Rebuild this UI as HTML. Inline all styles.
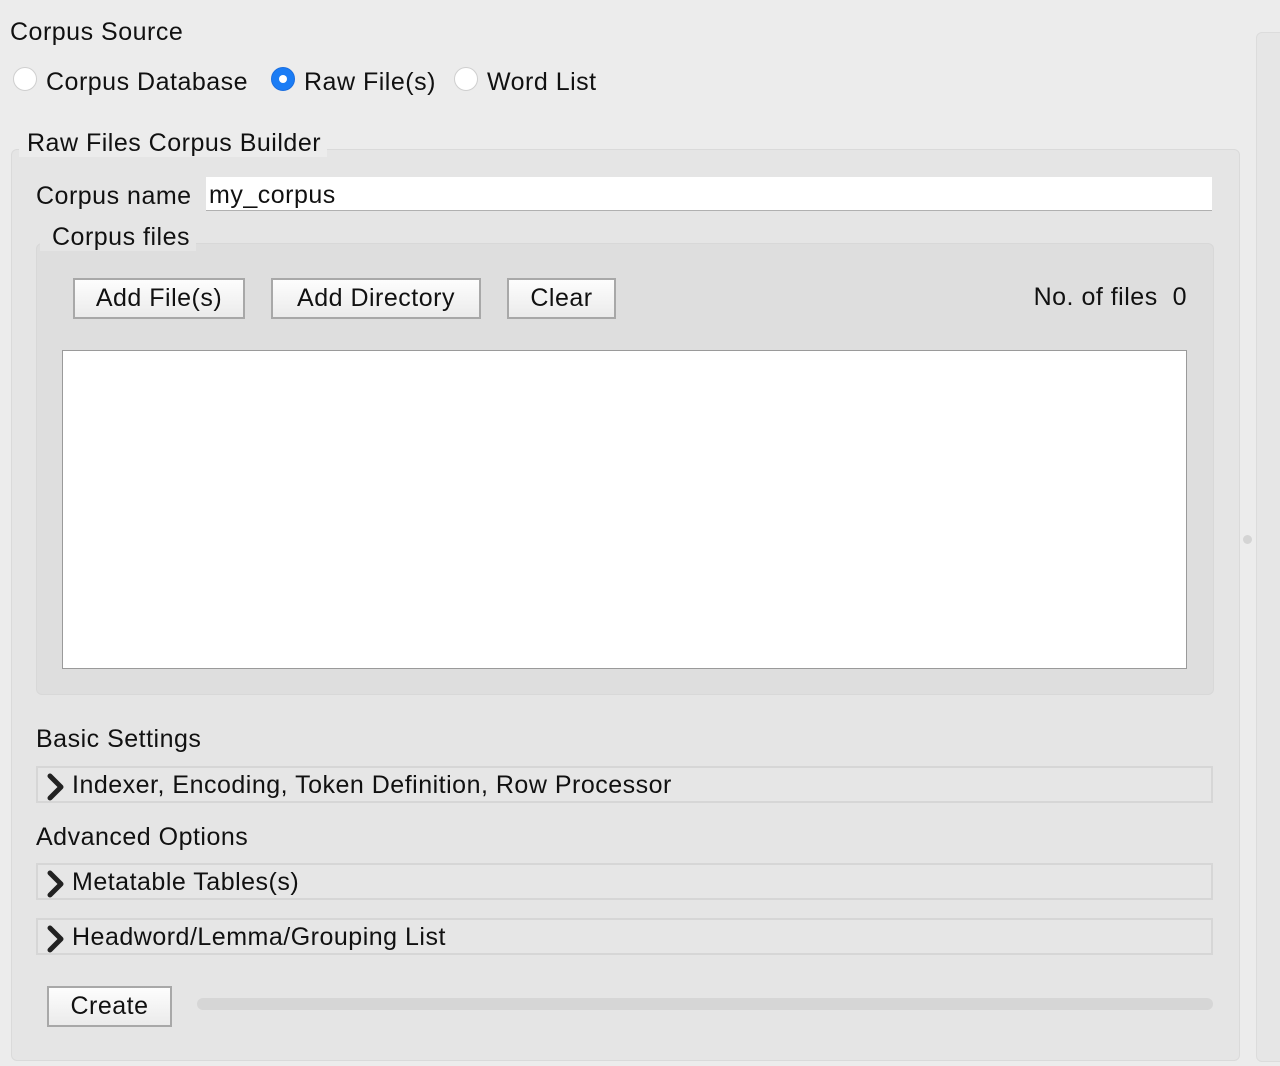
<!DOCTYPE html>
<html><head><style>
body{margin:0;width:1280px;height:1066px;background:#ececec;font-family:"Liberation Sans",sans-serif;font-size:25px;letter-spacing:0.5px;color:#111;position:relative;overflow:hidden}
.a{position:absolute;white-space:nowrap}
.t{line-height:28px}
.btn{position:absolute;box-sizing:border-box;border:2px solid #a8a8a8;background:linear-gradient(#fdfdfd,#ebebeb);text-align:center;line-height:37px}
.bar{position:absolute;left:36px;width:1177px;height:37px;box-sizing:border-box;border:2px solid #d6d6d6;background:#e6e6e6}
.bar span{position:absolute;left:34px;top:3px;line-height:28px}
.bar svg{position:absolute;left:7px;top:5px}
.radio{position:absolute;width:24px;height:24px;border-radius:50%;box-sizing:border-box;border:1px solid #cfcfcf;background:#fff}
</style></head><body>
<div class="a t" style="left:10px;top:18px">Corpus Source</div>
<div class="radio" style="left:13px;top:67px"></div>
<div class="a t" style="left:46px;top:68px">Corpus Database</div>
<div class="radio" style="left:271px;top:67px;background:#1a7cf5;border-color:#1a6ee0"><div style="position:absolute;left:7px;top:7px;width:8px;height:8px;border-radius:50%;background:#fff"></div></div>
<div class="a t" style="left:304px;top:68px">Raw File(s)</div>
<div class="radio" style="left:454px;top:67px"></div>
<div class="a t" style="left:487px;top:68px">Word List</div>

<div class="a" style="left:1256px;top:32px;width:30px;height:1028px;background:#e6e6e6;border:1px solid #dcdcdc;border-radius:6px"></div>
<div class="a" style="left:1243px;top:535px;width:9px;height:9px;border-radius:50%;background:#d4d4d4"></div>

<div class="a" style="left:11px;top:149px;width:1227px;height:910px;background:#e5e5e5;border:1px solid #dadada;border-radius:6px"></div>
<div class="a t" style="left:19px;top:129px;padding:0 6px 0 8px;background:#ececec">Raw Files Corpus Builder</div>

<div class="a t" style="left:36px;top:182px">Corpus name</div>
<div class="a" style="left:206px;top:177px;width:1006px;height:33px;background:#fff;border-bottom:1px solid #b0b0b0"></div>
<div class="a t" style="left:209px;top:181px">my_corpus</div>

<div class="a" style="left:36px;top:243px;width:1176px;height:450px;background:#dedede;border:1px solid #d8d8d8;border-radius:6px"></div>
<div class="a t" style="left:40px;top:223px;padding:0 6px 0 12px;background:#e5e5e5">Corpus files</div>

<div class="btn" style="left:73px;top:278px;width:172px;height:41px">Add File(s)</div>
<div class="btn" style="left:271px;top:278px;width:210px;height:41px">Add Directory</div>
<div class="btn" style="left:507px;top:278px;width:109px;height:41px">Clear</div>
<div class="a t" style="right:93px;top:283px">No. of files&nbsp; 0</div>
<div class="a" style="left:62px;top:350px;width:1123px;height:317px;background:#fff;border:1px solid #9a9a9a"></div>

<div class="a t" style="left:36px;top:725px">Basic Settings</div>
<div class="bar" style="top:766px"><svg width="22" height="28" viewBox="0 0 22 28"><path d="M5 3 L16 14 L5 25" fill="none" stroke="#222" stroke-width="5" stroke-linecap="round" stroke-linejoin="round"/></svg><span>Indexer, Encoding, Token Definition, Row Processor</span></div>
<div class="a t" style="left:36px;top:823px">Advanced Options</div>
<div class="bar" style="top:863px"><svg width="22" height="28" viewBox="0 0 22 28"><path d="M5 3 L16 14 L5 25" fill="none" stroke="#222" stroke-width="5" stroke-linecap="round" stroke-linejoin="round"/></svg><span>Metatable Tables(s)</span></div>
<div class="bar" style="top:918px"><svg width="22" height="28" viewBox="0 0 22 28"><path d="M5 3 L16 14 L5 25" fill="none" stroke="#222" stroke-width="5" stroke-linecap="round" stroke-linejoin="round"/></svg><span>Headword/Lemma/Grouping List</span></div>

<div class="btn" style="left:47px;top:986px;width:125px;height:41px">Create</div>
<div class="a" style="left:197px;top:998px;width:1016px;height:12px;border-radius:6px;background:#d6d6d6"></div>
</body></html>
